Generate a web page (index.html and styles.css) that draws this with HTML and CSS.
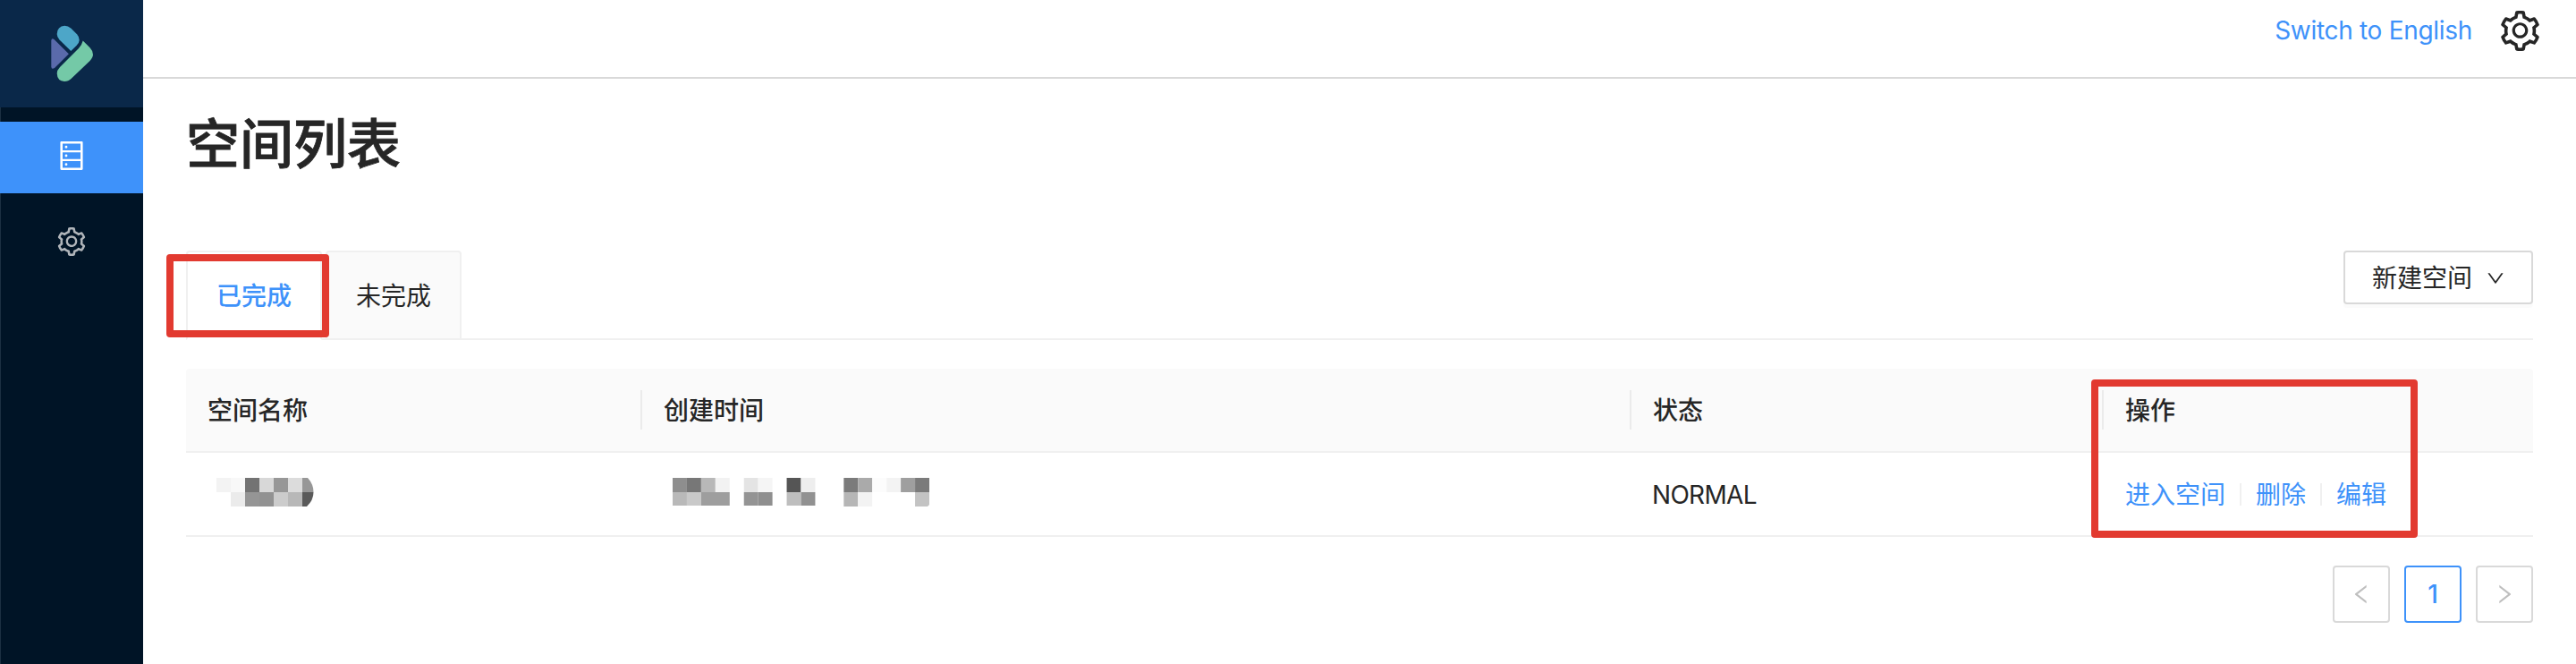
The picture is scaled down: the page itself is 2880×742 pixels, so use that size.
FILE: index.html
```html
<!DOCTYPE html>
<html lang="zh-CN">
<head>
<meta charset="utf-8">
<title>空间列表</title>
<link rel="stylesheet" href="styles.css">
</head>
<body>
<svg width="0" height="0" class="defs">
  <symbol id="setting" viewBox="64 64 896 896"><path d="M924.8 625.7l-65.5-56c3.1-19 4.7-38.4 4.7-57.8s-1.6-38.8-4.7-57.8l65.5-56a32.03 32.03 0 009.3-35.2l-.9-2.6a443.74 443.74 0 00-79.7-137.9l-1.8-2.1a32.12 32.12 0 00-35.1-9.5l-81.3 28.9c-30-24.6-63.5-44-99.7-57.6l-15.7-85a32.05 32.05 0 00-25.8-25.7l-2.7-.5c-52.1-9.4-106.9-9.4-159 0l-2.7.5a32.05 32.05 0 00-25.8 25.7l-15.8 85.4a351.86 351.86 0 00-99 57.4l-81.9-29.1a32 32 0 00-35.1 9.5l-1.8 2.1a446.02 446.02 0 00-79.7 137.9l-.9 2.6c-4.5 12.5-.8 26.5 9.3 35.2l66.3 56.6c-3.1 18.8-4.6 38-4.6 57.1 0 19.2 1.5 38.4 4.6 57.1L99 625.5a32.03 32.03 0 00-9.3 35.2l.9 2.6c18.1 50.4 44.9 96.9 79.7 137.9l1.8 2.1a32.12 32.12 0 0035.1 9.5l81.9-29.1c29.8 24.5 63.1 43.9 99 57.4l15.8 85.4a32.05 32.05 0 0025.8 25.7l2.7.5a449.4 449.4 0 00159 0l2.7-.5a32.05 32.05 0 0025.8-25.7l15.7-85a350 350 0 0099.7-57.6l81.3 28.9a32 32 0 0035.1-9.5l1.8-2.1c34.8-41.1 61.6-87.5 79.7-137.9l.9-2.6c4.5-12.3.8-26.3-9.3-35zM788.3 465.9c2.5 15.1 3.8 30.6 3.8 46.1s-1.3 31-3.8 46.1l-6.6 40.1 74.7 63.9a370.03 370.03 0 01-42.6 73.6L721 702.8l-31.4 25.8c-23.9 19.6-50.5 35-79.3 45.8l-38.1 14.3-17.9 97a377.5 377.5 0 01-85 0l-17.9-97.2-37.8-14.5c-28.5-10.8-55-26.2-78.7-45.7l-31.4-25.9-93.4 33.2c-17-22.9-31.2-47.6-42.6-73.6l75.5-64.5-6.5-40c-2.4-14.9-3.7-30.3-3.7-45.5 0-15.3 1.2-30.6 3.7-45.5l6.5-40-75.5-64.5c11.3-26.1 25.6-50.7 42.6-73.6l93.4 33.2 31.4-25.9c23.7-19.5 50.2-34.9 78.7-45.7l37.9-14.3 17.9-97.2c28.1-3.2 56.8-3.2 85 0l17.9 97 38.1 14.3c28.7 10.8 55.4 26.2 79.3 45.8l31.4 25.8 92.8-32.9c17 22.9 31.2 47.6 42.6 73.6L781.8 426l6.5 39.9zM512 326c-97.2 0-176 78.8-176 176s78.8 176 176 176 176-78.8 176-176-78.8-176-176-176zm79.2 255.2A111.6 111.6 0 01512 614c-29.9 0-58-11.7-79.2-32.8A111.6 111.6 0 01400 502c0-29.9 11.7-58 32.8-79.2C454 401.600 482.100 390 512 390c29.900 0 58 11.600 79.200 32.800A111.600 111.600 0 01624 502c0 29.900-11.700 58-32.800 79.200z"/></symbol>
</svg>
<div class="app">
  <aside class="side">
    <div class="brand">
      <svg width="50" height="64" viewBox="56 28 50 64">
        <path fill="#4da6c8" d="M63.7 38Q64 29.500 72.300 28.800Q76 28.800 79.500 31.800L86 38.300Q88.700 41 88.700 45Q88.500 48 85.500 51L79.300 57L66.500 44.500Q63.700 41.500 63.700 38Z"/>
        <path fill="#5a6aab" d="M57.300 45.500Q57.500 42 60.500 43.900L76.900 60.200L61 76Q57.500 78.200 57.300 74.500Z"/>
        <path fill="#74c9a7" d="M92.700 45.600L100.500 53.300Q104 57 104 61Q104 64 100.500 68L79.500 88Q76.500 91 72 91Q64 90.500 63.700 82Q63.700 78.500 67 75L88 54Q91.700 50 92.700 45.600Z"/>
      </svg>
    </div>
    <nav class="menu">
      <a class="item active"><svg width="32" height="32" viewBox="64 64 896 896"><path d="M832 64H192c-17.700 0-32 14.300-32 32v832c0 17.700 14.300 32 32 32h640c17.700 0 32-14.300 32-32V96c0-17.700-14.300-32-32-32zm-600 72h560v208H232V136zm560 480H232V408h560v208zm0 272H232V680h560v208zM304 240a40 40 0 1080 0 40 40 0 10-80 0zm0 272a40 40 0 1080 0 40 40 0 10-80 0zm0 272a40 40 0 1080 0 40 40 0 10-80 0z"/></svg></a>
      <a class="item"><svg width="32" height="32"><use href="#setting"/></svg></a>
    </nav>
  </aside>
  <div class="page">
    <header class="top">
      <a class="lang">Switch to English</a>
      <svg width="45" height="45"><use href="#setting"/></svg>
    </header>
    <main class="main">
      <h1 class="title">空间列表</h1>
      <div class="tabs">
        <div class="tab on">已完成<i class="mark mark-tab"></i></div>
        <div class="tab">未完成</div>
        <div class="extra">
          <button class="create"><span>新建空间</span><svg width="20" height="20" viewBox="64 64 896 896"><path d="M884 256h-75c-5.100 0-9.900 2.500-12.900 6.600L512 654.200 227.900 262.600c-3-4.100-7.800-6.600-12.900-6.600h-75c-6.500 0-10.300 7.400-6.500 12.700l352.600 486.100c12.800 17.600 39 17.600 51.700 0l352.600-486.100c3.900-5.300.1-12.700-6.400-12.700z"/></svg></button>
        </div>
      </div>
      <div class="table">
        <div class="row head">
          <div class="cell">空间名称</div><div class="cell">创建时间</div><div class="cell">状态</div><div class="cell">操作</div>
        </div>
        <div class="row">
          <div class="cell"><svg class="mosaic" width="120" height="32" viewBox="0 0 120 32">
            <clipPath id="round"><path d="M0 0H102Q108.500 7 108.500 16Q108.500 25 101 32H0Z"/></clipPath>
            <g clip-path="url(#round)">
              <path fill="#f3f3f3" d="M0 0h16v16H0z"/><path fill="#f8f8f8" d="M16 0h16v16H16z"/><path fill="#737373" d="M32 0h16v16H32z"/><path fill="#d8d8d8" d="M48 0h16v16H48z"/><path fill="#979797" d="M64 0h16v16H64z"/><path fill="#dcdcdc" d="M80 0h16v16H80z"/><path fill="#979797" d="M96 0h16v16H96z"/>
              <path fill="#ebebeb" d="M16 16h16v16H16z"/><path fill="#959595" d="M32 16h16v16H32z"/><path fill="#929292" d="M48 16h16v16H48z"/><path fill="#cccccc" d="M64 16h16v16H64z"/><path fill="#b8b8b8" d="M80 16h16v16H80z"/><path fill="#5a5a5a" d="M96 16h16v16H96z"/>
            </g>
          </svg></div>
          <div class="cell"><svg class="mosaic" width="287" height="32" viewBox="0 0 288 32" preserveAspectRatio="none">
            <path fill="#8e8e8e" d="M0 0h16v16H0z"/><path fill="#777777" d="M16 0h16v16H16z"/><path fill="#b8b8b8" d="M32 0h16v16H32z"/><path fill="#f2f2f2" d="M48 0h16v16H48z"/><path fill="#e4e4e4" d="M80 0h16v16H80z"/><path fill="#f5f5f5" d="M96 0h16v16H96z"/><path fill="#555555" d="M128 0h16v16h-16z"/><path fill="#eeeeee" d="M144 0h16v16h-16z"/><path fill="#7b7b7b" d="M192 0h16v16h-16z"/><path fill="#aaaaaa" d="M208 0h16v16h-16z"/><path fill="#fcfcfc" d="M224 0h16v16h-16z"/><path fill="#f3f3f3" d="M240 0h16v16h-16z"/><path fill="#9f9f9f" d="M256 0h16v16h-16z"/><path fill="#7b7b7b" d="M272 0h16v16h-16z"/>
            <path fill="#b9b9b9" d="M0 16h16v15H0z"/><path fill="#c9c9c9" d="M16 16h16v15H16z"/><path fill="#9e9e9e" d="M32 16h32v15H32z"/><path fill="#949494" d="M80 16h16v15H80z"/><path fill="#8f8f8f" d="M96 16h16v15H96z"/><path fill="#bebebe" d="M128 16h16v15h-16z"/><path fill="#919191" d="M144 16h16v15h-16z"/><path fill="#b6b6b6" d="M192 16h16v16h-16z"/><path fill="#f3f3f3" d="M208 16h16v16h-16z"/><path fill="#c3c3c3" d="M272 16h16v14l-2 2h-14z"/>
          </svg></div>
          <div class="cell latin">NORMAL</div>
          <div class="cell actions"><a>进入空间</a><i></i><a>删除</a><i></i><a>编辑</a></div>
        </div>
        <i class="mark mark-actions"></i>
      </div>
      <div class="pager">
        <span class="pg"><svg width="24" height="24" viewBox="64 64 896 896"><path d="M724 218.300V141c0-6.700-7.700-10.400-12.900-6.300L260.300 486.800a31.860 31.860 0 000 50.300l450.800 352.100c5.300 4.100 12.900.4 12.900-6.300v-77.300c0-4.900-2.300-9.600-6.100-12.600l-360-281 360-281.100c3.800-3 6.100-7.700 6.100-12.600z"/></svg></span>
        <span class="pg cur">1</span>
        <span class="pg next"><svg width="24" height="24" viewBox="64 64 896 896"><path d="M724 218.300V141c0-6.700-7.700-10.400-12.900-6.300L260.300 486.800a31.860 31.860 0 000 50.300l450.800 352.100c5.300 4.100 12.900.4 12.900-6.300v-77.300c0-4.900-2.300-9.600-6.100-12.600l-360-281 360-281.100c3.800-3 6.100-7.700 6.100-12.600z"/></svg></span>
      </div>
    </main>
  </div>
</div>
</body>
</html>
```
FILE: styles.css
```css
* { box-sizing: border-box; }
body {
  margin: 0;
  background: #fff;
  color: #262626;
  font: 28px/44px Inter, "Noto Sans CJK SC", sans-serif;
}
svg { display: block; fill: currentColor; }
.defs { position: absolute; }
.app { display: flex; height: 742px; overflow: hidden; }

.side { width: 160px; flex: none; background: #001426; box-shadow: inset 1px 0 #1c3042; }
.brand { height: 120px; padding-left: 2px; background: #0a2849; display: flex; justify-content: center; align-items: center; }
.menu { padding-top: 16px; display: flex; flex-direction: column; gap: 16px; }
.item { height: 80px; display: flex; align-items: center; justify-content: center; color: #b0b5ba; padding-bottom: 4px; }
.item.active { background: #3e92fa; color: #fff; }

.page { flex: 1; min-width: 0; }
.top {
  height: 88px;
  border-bottom: 2px solid #d9d9d9;
  display: flex;
  justify-content: flex-end;
  align-items: flex-start;
  gap: 31px;
  padding: 12px 40px 0 0;
}
.lang { color: #3e92fa; line-height: 44px; letter-spacing: -.3px; }

.main { padding: 32px 48px 0; }
.title { margin: 0; height: 80px; font-size: 60px; line-height: 82px; font-weight: 500; -webkit-text-stroke: .8px #262626; }

.tabs { margin-top: 80px; height: 100px; display: flex; gap: 4px; box-shadow: inset 0 -2px #f0f0f0; }
.tab {
  position: relative;
  width: 152px;
  height: 100px;
  padding-top: 27px;
  text-align: center;
  background: #fafafa;
  border: 2px solid #f0f0f0;
  border-radius: 4px 4px 0 0;
}
.tab.on { z-index: 1; background: #fff; border-bottom-color: #fff; color: #3e92fa; font-weight: 500; }
.extra { margin-left: auto; }
.create {
  width: 212px;
  height: 60px;
  display: flex;
  align-items: center;
  gap: 16px;
  padding: 1px 0 0 30px;
  font: inherit;
  color: inherit;
  background: #fff;
  border: 2px solid #d9d9d9;
  border-radius: 4px;
  box-shadow: 0 4px 0 rgba(0, 0, 0, .016);
}

.table { position: relative; margin-top: 32px; }
.row { display: grid; grid-template-columns: 510px 1106px 528px 480px; height: 94px; border-bottom: 2px solid #f0f0f0; }
.cell { display: flex; align-items: center; padding-left: 24px; }
.head { background: #fafafa; border-radius: 4px 4px 0 0; font-weight: 500; }
.head .cell { padding-top: 1px; background: linear-gradient(#ebebeb, #ebebeb) no-repeat right center / 2px 44px; }
.head .cell:last-child { background: none; }
.latin { letter-spacing: -.7px; padding-left: 23px; padding-top: 1px; }
.mosaic { margin: -5px 0 0 10px; }
.actions { gap: 16px; color: #3e92fa; padding-top: 1px; }
.actions i { width: 2px; height: 25px; background: #f0f0f0; }

.pager { margin-top: 32px; display: flex; justify-content: flex-end; gap: 16px; }
.pg {
  width: 64px;
  height: 64px;
  display: flex;
  align-items: center;
  justify-content: center;
  border: 2px solid #d9d9d9;
  border-radius: 4px;
  color: #bfbfbf;
}
.pg.cur { border-color: #3e92fa; color: #3e92fa; font-weight: 500; }
.next svg { transform: scaleX(-1); }

.mark { position: absolute; border: 8px solid #e23a30; border-radius: 4px; }
.mark-tab { left: -24px; top: 2px; width: 182px; height: 93px; }
.mark-actions { left: 2130px; top: 12px; width: 365px; height: 177px; }
```
